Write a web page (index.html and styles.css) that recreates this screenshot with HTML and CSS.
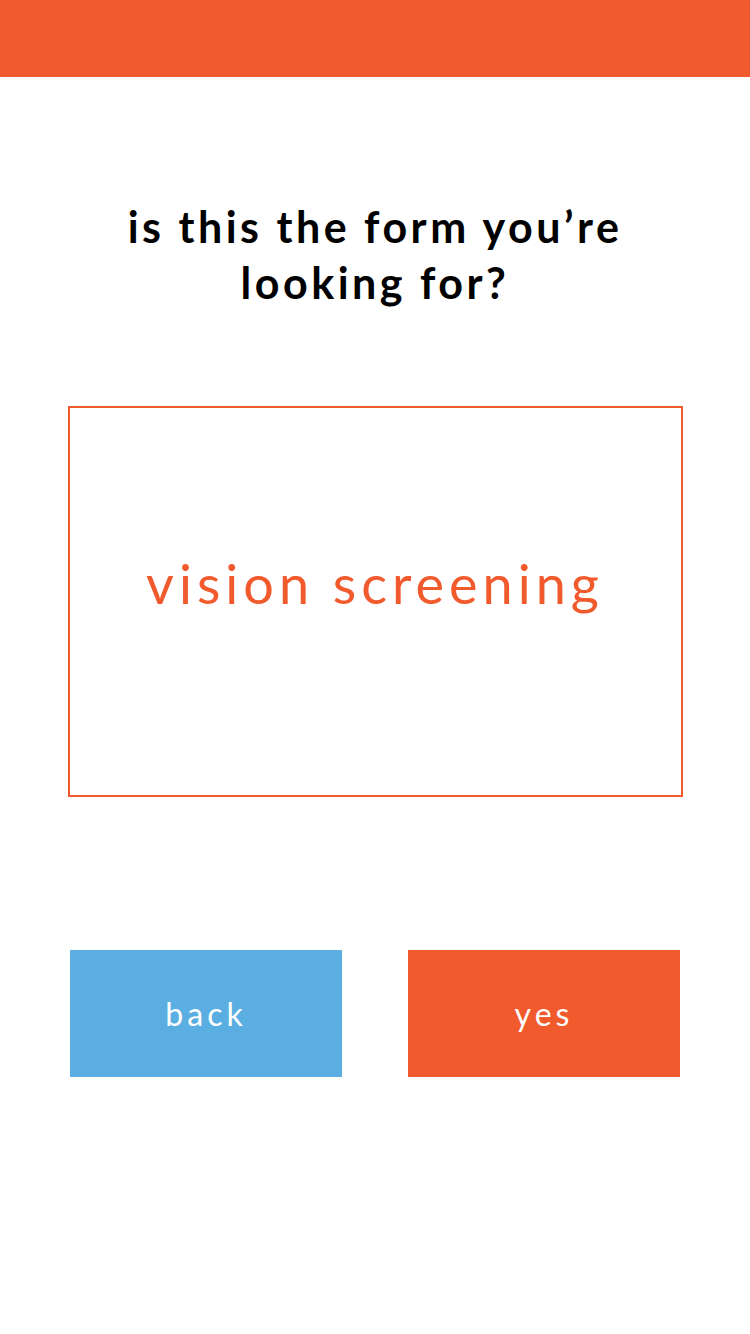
FILE: index.html
```html
<!DOCTYPE html>
<html>
<head>
<meta charset="utf-8">
<link rel="stylesheet" href="styles.css">
</head>
<body>
<div class="page">
  <header class="topbar"></header>
  <main class="content">
    <h1 class="question">is this the form you’re<br>looking for?</h1>
    <div class="form-card">
      <span class="form-name">vision screening</span>
    </div>
    <div class="actions">
      <button class="btn btn-back">back</button>
      <button class="btn btn-yes">yes</button>
    </div>
  </main>
</div>
</body>
</html>
```
FILE: styles.css
```css
html, body {
  margin: 0;
  padding: 0;
  background: #ffffff;
}
.page {
  width: 750px;
  height: 1334px;
  display: flex;
  flex-direction: column;
  font-family: "Lato", "Open Sans", sans-serif;
}
.topbar {
  height: 77px;
  background: #F15A2C;
  flex: none;
}
.content {
  display: flex;
  flex-direction: column;
  align-items: center;
}
.question {
  margin: 122px 0 0;
  font-size: 43px;
  line-height: 56px;
  font-weight: 700;
  letter-spacing: 3.5px;
  text-align: center;
  color: #000;
}
.form-card {
  margin-top: 95px;
  width: 615px;
  height: 391px;
  box-sizing: border-box;
  border: 2px solid #F15A2C;
  display: flex;
  align-items: center;
  justify-content: center;
  padding-bottom: 36px;
}
.form-name {
  color: #F15A2C;
  font-size: 54px;
  letter-spacing: 5px;
  font-weight: 400;
}
.actions {
  margin-top: 153px;
  width: 610px;
  display: flex;
  justify-content: space-between;
}
.btn {
  width: 272px;
  height: 127px;
  border: none;
  padding: 0;
  color: #fff;
  font-family: "Lato", "Open Sans", sans-serif;
  font-size: 32px;
  letter-spacing: 4px;
  display: flex;
  align-items: center;
  justify-content: center;
}
.btn-back { background: #5AAEE2; }
.btn-yes { background: #F15A2C; }
```
